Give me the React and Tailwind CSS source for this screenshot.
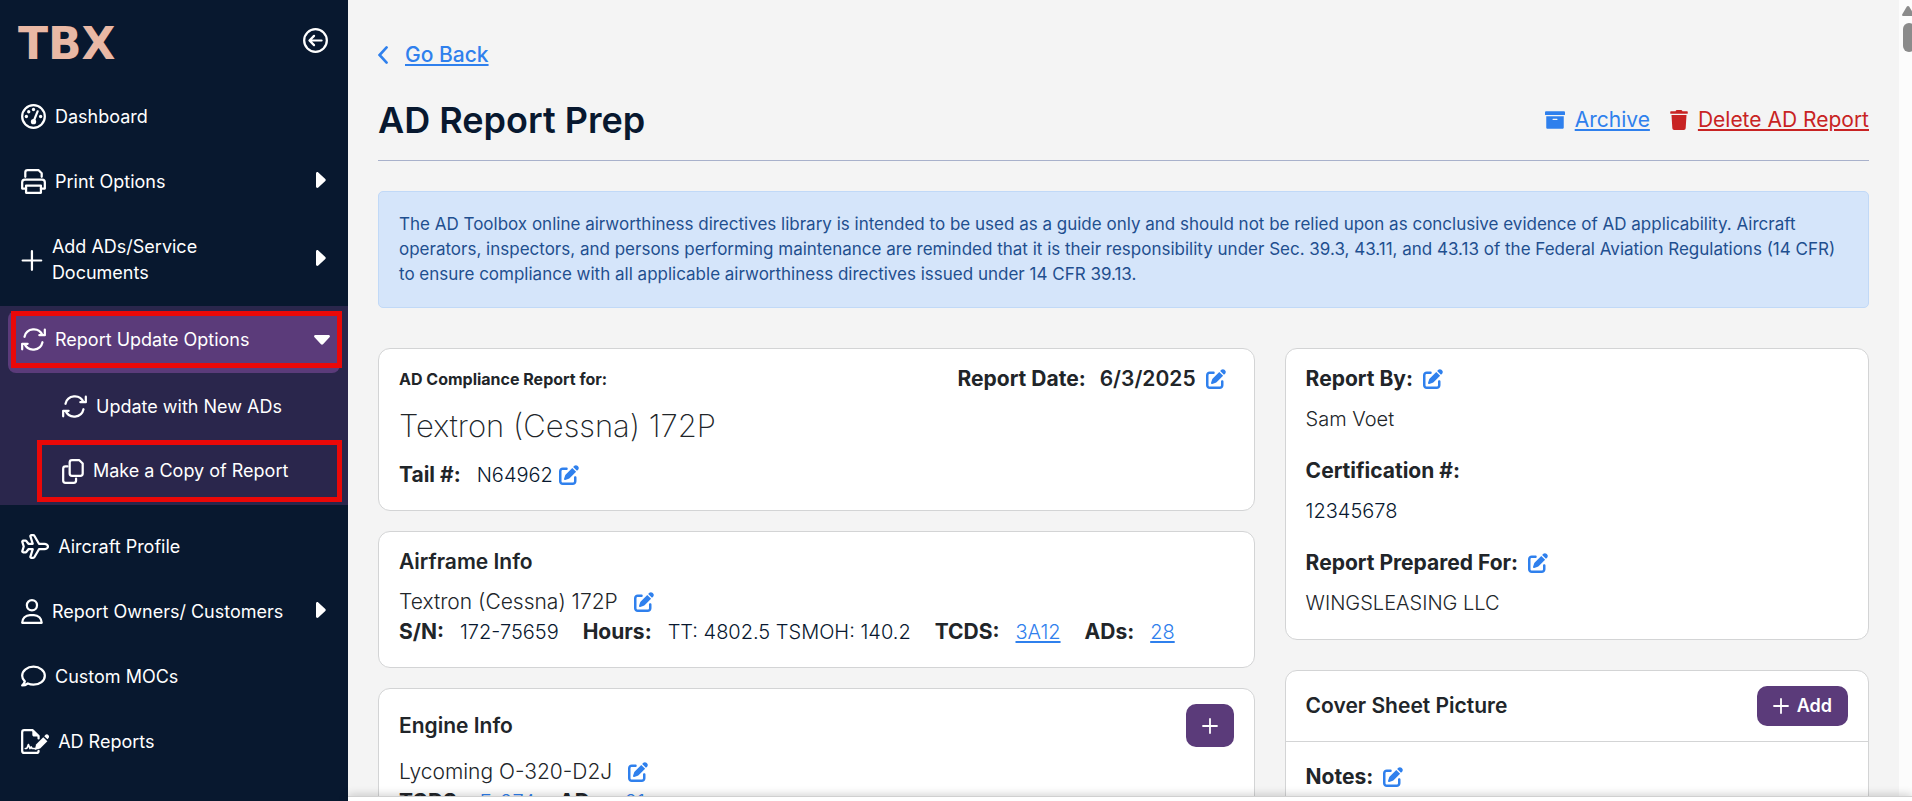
import React, { useState } from 'react';
import { FaArchive, FaTrash } from 'react-icons/fa';
import { FaPenToSquare } from 'react-icons/fa6';

// Outline icons, drawn on a 512 high grid
const ICONS = {
  dashboard: {
    width: 512,
    shape: (
      <>
        <circle cx="256" cy="256" r="232" />
        <path d="M340 150 268 330" />
        <g fill="currentColor" stroke="none">
          <circle cx="256" cy="362" r="54" />
          <circle cx="110" cy="256" r="34" />
          <circle cx="158" cy="158" r="34" />
          <circle cx="256" cy="112" r="34" />
          <circle cx="402" cy="256" r="34" />
        </g>
      </>
    )
  },
  print: {
    width: 512,
    shape: (
      <>
        <path d="M88 160V72a48 48 0 0 1 48-48h226l62 62v74" />
        <path d="M104 400H24V272a56 56 0 0 1 56-56h352a56 56 0 0 1 56 56v128h-80" />
        <path d="M104 340h304v148H104z" />
      </>
    )
  },
  plus: {
    width: 448,
    shape: <path d="M224 66v380M34 256h380" />
  },
  sync: {
    width: 512,
    shape: (
      <>
        <path d="M72 200A194 194 0 0 1 440 168M488 56v112H376" />
        <path d="M440 312A194 194 0 0 1 72 344M24 456V344h112" />
      </>
    )
  },
  copy: {
    width: 448,
    shape: (
      <>
        <path d="M157 72a48 48 0 0 1 48-48h150l69 69v206a48 48 0 0 1-48 48H205a48 48 0 0 1-48-48z" />
        <path d="M112 152H72a48 48 0 0 0-48 48v240a48 48 0 0 0 48 48h168a48 48 0 0 0 48-48v-40" />
      </>
    )
  },
  plane: {
    width: 576,
    shape: (
      <path d="M368 200h112c36 0 72 28 72 56s-36 56-72 56H368l-92 160a32 32 0 0 1-28 16h-36a20 20 0 0 1-19-26l47-150h-88l-44 56a16 16 0 0 1-13 6H44a18 18 0 0 1-17-23l29-95-29-95a18 18 0 0 1 17-23h51a16 16 0 0 1 13 6l44 56h88L193 50a20 20 0 0 1 19-26h36a32 32 0 0 1 28 16z" />
    )
  },
  user: {
    width: 448,
    shape: (
      <>
        <circle cx="224" cy="128" r="104" />
        <path d="M24 488c0-92 72-160 160-160h80c88 0 160 68 160 160z" />
      </>
    )
  },
  comment: {
    width: 512,
    shape: (
      <path d="M256 56c128 0 232 82 232 184s-104 184-232 184c-42 0-82-9-116-25-30 22-68 41-116 41 28-22 46-52 54-84C44 324 24 284 24 240 24 138 128 56 256 56z" />
    )
  },
  signature: {
    width: 576,
    shape: (
      <>
        <path d="M360 448c0 22-18 40-40 40H64c-22 0-40-18-40-40V64c0-22 18-40 40-40h176l120 120v50" />
        <path d="M88 400h16c14 0 20-8 26-24l22-56 32 80 24-34 20 34h60" strokeWidth="34" />
        <g fill="currentColor" stroke="none">
          <path d="M232 12v108c0 22 14 36 36 36h108z" />
          <path d="M456 168 308 316l-28 112 112-28 148-148z" />
          <path d="m476 146 26-26c16-14 38-14 52 0l8 8c18 18 18 40 2 56l-22 26z" />
        </g>
      </>
    )
  },
  back: {
    width: 512,
    shape: (
      <>
        <circle cx="256" cy="256" r="232" />
        <path d="M380 256H136M226 162l-94 94 94 94" />
      </>
    )
  }
};

function Icon({ name }) {
  const icon = ICONS[name];
  return (
    <svg
      viewBox={`0 0 ${icon.width} 512`}
      className="h-[25px] w-auto shrink-0"
      fill="none"
      stroke="currentColor"
      strokeWidth="46"
      strokeLinecap="round"
      strokeLinejoin="round"
      aria-hidden="true"
    >
      {icon.shape}
    </svg>
  );
}

function Caret({ open }) {
  return open ? (
    <svg viewBox="0 0 16 10" className="h-[10px] w-4 shrink-0" fill="currentColor" aria-hidden="true">
      <path d="M1.5 0h13c1.3 0 1.9 1.4 1 2.3L9 9.3c-.6.6-1.4.6-2 0L.5 2.3C-.4 1.4.2 0 1.5 0z" />
    </svg>
  ) : (
    <svg viewBox="0 0 10 16" className="mb-1 h-4 w-[10px] shrink-0" fill="currentColor" aria-hidden="true">
      <path d="M0 1.5v13c0 1.3 1.4 1.9 2.3 1L9.3 9c.6-.6.6-1.4 0-2L2.3.5C1.4-.4 0 .2 0 1.5z" />
    </svg>
  );
}

const topItems = [
  { icon: 'dashboard', label: 'Dashboard' },
  { icon: 'print', label: 'Print Options', hasMenu: true },
  { icon: 'plus', label: 'Add ADs/Service Documents', hasMenu: true, tall: true }
];

const bottomItems = [
  { icon: 'plane', label: 'Aircraft Profile' },
  { icon: 'user', label: 'Report Owners/ Customers', hasMenu: true },
  { icon: 'comment', label: 'Custom MOCs' },
  { icon: 'signature', label: 'AD Reports' }
];

function NavItem({ item }) {
  return (
    <a
      href="#"
      className={`flex items-center gap-[9px] pl-[21px] pr-[22px] ${item.tall ? 'h-[92px]' : 'h-[65px]'}`}
    >
      <Icon name={item.icon} />
      <span className={item.tall ? 'w-[180px]' : 'flex-1 whitespace-nowrap'}>{item.label}</span>
      {item.hasMenu && (
        <span className="ml-auto">
          <Caret />
        </span>
      )}
    </a>
  );
}

function Sidebar() {
  const [open, setOpen] = useState(true);

  return (
    <aside className="w-[348px] shrink-0 bg-[#08182f] text-[18px] leading-[26px] text-white">
      <div className="flex h-[84px] items-start justify-between pl-[18px] pr-[20px] pt-[28px]">
        <span className="font-['DejaVu_Sans'] text-[44px] font-bold leading-8 text-[#e9b8a5]">TBX</span>
        <button type="button" aria-label="Collapse menu">
          <Icon name="back" />
        </button>
      </div>
      <nav>
        {topItems.map((item) => (
          <NavItem key={item.label} item={item} />
        ))}

        <div className="bg-[#2a264c] pt-[5px]">
          <div className="mx-2 rounded-lg bg-[#5b3b7a] pb-[5px]">
            <button
              type="button"
              onClick={() => setOpen(!open)}
              className="-mr-[2px] ml-[3px] flex h-[57px] w-[331px] items-center gap-[9px] border-[5px] border-[#ea0808] pl-[5px] pr-[7px]"
            >
              <Icon name="sync" />
              <span className="flex-1 text-left">Report Update Options</span>
              <Caret open={open} />
            </button>
          </div>
          {open && (
            <div className="pb-[3px]">
              <a href="#" className="flex h-[67px] items-center gap-[9px] pl-[62px]">
                <Icon name="sync" />
                <span>Update with New ADs</span>
              </a>
              <a
                href="#"
                className="ml-[37px] mr-[6px] flex h-[62px] items-center gap-[9px] border-[5px] border-[#ea0808] pl-5"
              >
                <Icon name="copy" />
                <span>Make a Copy of Report</span>
              </a>
            </div>
          )}
        </div>

        <div className="pt-[9px]">
          {bottomItems.map((item) => (
            <NavItem key={item.label} item={item} />
          ))}
        </div>
      </nav>
    </aside>
  );
}

function EditButton({ label }) {
  return (
    <button type="button" aria-label={label} className="text-[#2f80ed]">
      <FaPenToSquare className="size-5" />
    </button>
  );
}

function Card({ className = '', children }) {
  return <section className={`rounded-xl border border-[#d3d4d5] bg-white ${className}`}>{children}</section>;
}

function Field({ label, children }) {
  return (
    <div className="flex gap-4">
      <span className="font-bold">{label}</span>
      <span className="text-[20px] font-light text-[#08182f]">{children}</span>
    </div>
  );
}

function Link({ children }) {
  return (
    <a href="#" className="text-[#2f80ed] underline decoration-2 underline-offset-2">
      {children}
    </a>
  );
}

function PageHeader() {
  return (
    <header>
      <a href="#" className="inline-flex items-center gap-[17px] font-medium text-[#2f80ed]">
        <svg viewBox="0 0 10 18" className="h-[18px] w-[10px]" fill="none" stroke="currentColor" strokeWidth="2.6" strokeLinecap="round" aria-hidden="true">
          <path d="M8.6 1.4 1.6 9l7 7.6" />
        </svg>
        <span className="underline decoration-2 underline-offset-2">Go Back</span>
      </a>
      <div className="flex items-center justify-between border-b border-[#a8b1cb] pb-[13px] pt-[21px]">
        <h1 className="text-[36px] font-semibold leading-[54px] text-[#08182f]">AD Report Prep</h1>
        <div className="flex items-center gap-5">
          <a href="#" className="flex items-center gap-[10px] text-[#2f80ed]">
            <FaArchive className="size-5" />
            <span className="underline decoration-2 underline-offset-2">Archive</span>
          </a>
          <a href="#" className="flex items-center gap-[10px] text-[#c82323]">
            <FaTrash className="h-5 w-[18px]" />
            <span className="underline decoration-2 underline-offset-2">Delete AD Report</span>
          </a>
        </div>
      </div>
    </header>
  );
}

export default function App() {
  return (
    <div className="flex h-screen overflow-hidden font-[Inter,sans-serif] text-[#212529]">
      <Sidebar />

      <div className="flex min-w-0 flex-1 flex-col">
        <div className="flex min-h-0 flex-1">
          <main className="min-w-0 flex-1 overflow-hidden bg-[#f4f4f4] px-[30px] pt-10 text-[21px] leading-[30px]">
            <PageHeader />

            <p className="mt-[30px] rounded-[5px] border border-[#c1d9f7] bg-[#d5e5fa] p-5 text-[17px] leading-[25px] text-[#1f4f8f]">
              The AD Toolbox online airworthiness directives library is intended to be used as a guide only and should
              not be relied upon as conclusive evidence of AD applicability. Aircraft operators, inspectors, and persons
              performing maintenance are reminded that it is their responsibility under Sec. 39.3, 43.11, and 43.13 of
              the Federal Aviation Regulations (14 CFR) to ensure compliance with all applicable airworthiness
              directives issued under 14 CFR 39.13.
            </p>

            <div className="mt-10 grid grid-cols-[3fr_2fr] items-start gap-[30px]">
              {/* Aircraft details */}
              <div className="space-y-5">
                <Card className="px-5 pb-5 pt-[15px]">
                  <div className="flex items-center justify-between">
                    <h2 className="text-[16px] font-bold">AD Compliance Report for:</h2>
                    <div className="flex items-center gap-[10px] pr-2">
                      <span className="mr-1 font-bold">Report Date:</span>
                      <span className="font-semibold">6/3/2025</span>
                      <EditButton label="Edit report date" />
                    </div>
                  </div>
                  <p className="mt-[10px] text-[31px] font-extralight leading-[44px]">Textron (Cessna) 172P</p>
                  <div className="mt-3 flex items-center gap-[6px]">
                    <Field label="Tail #:">N64962</Field>
                    <EditButton label="Edit tail number" />
                  </div>
                </Card>

                <Card className="px-5 pb-5 pt-[15px]">
                  <h2 className="font-semibold">Airframe Info</h2>
                  <div className="mt-[10px] flex items-center gap-4 font-light">
                    Textron (Cessna) 172P
                    <EditButton label="Edit airframe" />
                  </div>
                  <div className="flex gap-6">
                    <Field label="S/N:">172-75659</Field>
                    <Field label="Hours:">TT: 4802.5 TSMOH: 140.2</Field>
                    <Field label="TCDS:">
                      <Link>3A12</Link>
                    </Field>
                    <Field label="ADs:">
                      <Link>28</Link>
                    </Field>
                  </div>
                </Card>

                <Card className="px-5 pb-5 pt-[15px]">
                  <div className="flex items-center justify-between">
                    <h2 className="font-semibold">Engine Info</h2>
                    <button
                      type="button"
                      aria-label="Add engine"
                      className="flex h-[43px] w-12 items-center justify-center rounded-[10px] bg-[#5b3b7a] text-white"
                    >
                      <svg viewBox="0 0 16 16" className="size-4" stroke="currentColor" strokeWidth="1.8" strokeLinecap="round" aria-hidden="true">
                        <path d="M8 1v14M1 8h14" />
                      </svg>
                    </button>
                  </div>
                  <div className="mt-[10px] flex items-center gap-4 font-light">
                    Lycoming O-320-D2J
                    <EditButton label="Edit engine" />
                  </div>
                  <div className="flex gap-6">
                    <Field label="TCDS:">
                      <Link>E-274</Link>
                    </Field>
                    <Field label="ADs:">
                      <Link>21</Link>
                    </Field>
                  </div>
                </Card>
              </div>

              {/* Report details */}
              <div className="space-y-[30px]">
                <Card className="space-y-[22px] px-5 pb-[21px] pt-[15px]">
                  <div className="space-y-[10px]">
                    <div className="flex items-center gap-[10px]">
                      <span className="font-bold">Report By:</span>
                      <EditButton label="Edit report by" />
                    </div>
                    <p className="text-[20px] font-light">Sam Voet</p>
                  </div>
                  <div className="space-y-[10px]">
                    <p className="font-bold">Certification #:</p>
                    <p className="text-[20px] font-light text-[#08182f]">12345678</p>
                  </div>
                  <div className="space-y-[10px]">
                    <div className="flex items-center gap-[10px]">
                      <span className="font-bold">Report Prepared For:</span>
                      <EditButton label="Edit report prepared for" />
                    </div>
                    <p className="text-[20px] font-light">WINGSLEASING LLC</p>
                  </div>
                </Card>

                <Card>
                  <div className="flex items-center justify-between border-b border-[#d3d4d5] px-5 py-[15px]">
                    <h2 className="font-semibold">Cover Sheet Picture</h2>
                    <button
                      type="button"
                      className="flex h-10 items-center gap-2 rounded-[10px] bg-[#5b3b7a] px-4 text-[18px] font-semibold text-white"
                    >
                      <svg viewBox="0 0 16 16" className="size-4" stroke="currentColor" strokeWidth="1.8" strokeLinecap="round" aria-hidden="true">
                        <path d="M8 1v14M1 8h14" />
                      </svg>
                      Add
                    </button>
                  </div>
                  <div className="flex items-center gap-[10px] px-5 pb-[30px] pt-5">
                    <span className="font-bold">Notes:</span>
                    <EditButton label="Edit notes" />
                  </div>
                </Card>
              </div>
            </div>
          </main>

          {/* Scroll track */}
          <div className="flex w-[13px] flex-col overflow-hidden bg-[#fcfcfc] pl-[3px] pt-[6px]" aria-hidden="true">
            <svg viewBox="0 0 12 10" className="h-[10px] w-3 shrink-0" fill="#8b8b8b">
              <path d="M6 0c.6 0 1 .4 1.3.8l4.4 7.4c.5.9 0 1.8-1 1.8H1.3c-1 0-1.5-.9-1-1.8L4.7.8C5 .4 5.4 0 6 0z" />
            </svg>
            <div className="ml-[1px] mt-[7px] h-[29px] w-3 shrink-0 rounded-full bg-[#8b8b8b]" />
          </div>
        </div>
        <footer className="relative z-10 h-[5px] border-t border-[#d0d0d0] bg-white shadow-[0_0_10px_rgba(0,0,0,0.3)]" />
      </div>
    </div>
  );
}
